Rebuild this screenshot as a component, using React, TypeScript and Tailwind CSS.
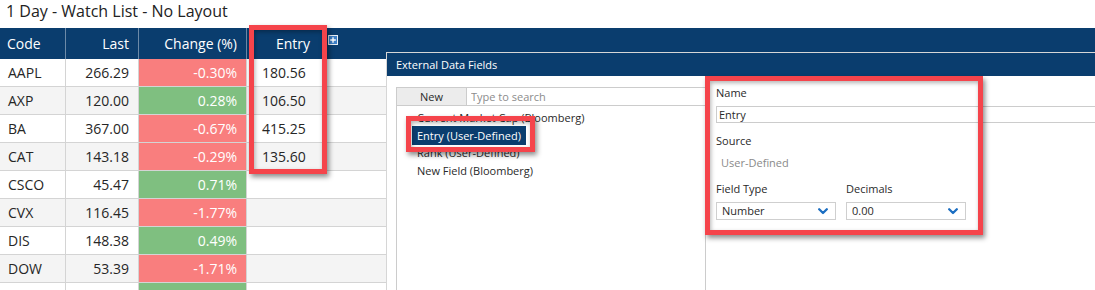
import React from 'react';

const rows = [
  { code: 'AAPL', last: '266.29', change: '-0.30%', entry: '180.56', up: false },
  { code: 'AXP', last: '120.00', change: '0.28%', entry: '106.50', up: true },
  { code: 'BA', last: '367.00', change: '-0.67%', entry: '415.25', up: false },
  { code: 'CAT', last: '143.18', change: '-0.29%', entry: '135.60', up: false },
  { code: 'CSCO', last: '45.47', change: '0.71%', entry: '', up: true },
  { code: 'CVX', last: '116.45', change: '-1.77%', entry: '', up: false },
  { code: 'DIS', last: '148.38', change: '0.49%', entry: '', up: true },
  { code: 'DOW', last: '53.39', change: '-1.71%', entry: '', up: false },
  // next row only peeks in at the bottom edge
  { code: '', last: '', change: '', entry: '', up: true },
];

const fields = [
  'Current Market Cap (Bloomberg)',
  'Entry (User-Defined)',
  'Rank (User-Defined)',
  'New Field (Bloomberg)',
];

function Chevron() {
  return (
    <svg width="10" height="7" viewBox="0 0 10 7">
      <path d="M1.2 1.3 L5 5 L8.8 1.3" fill="none" stroke="#1b6ec2" strokeWidth="2.3" strokeLinecap="round" strokeLinejoin="round" />
    </svg>
  );
}

function PlusIcon() {
  return (
    <svg width="10" height="10" viewBox="0 0 10 10">
      <rect x="0.5" y="0.5" width="9" height="9" fill="#3c7fc6" stroke="#e8eef5" />
      <path d="M5 2.2 V7.8 M2.2 5 H7.8" stroke="#fff" strokeWidth="1.4" />
    </svg>
  );
}

function Select({ value }: { value: string }) {
  return (
    <div className="flex items-center justify-between w-[120px] h-[18px] border border-[#cfcfcf] pl-[5px] pr-[7px] leading-[16px]">
      <span>{value}</span>
      <Chevron />
    </div>
  );
}

const annotate =
  'absolute border-[5px] border-[#f5444b] shadow-[2px_3px_5px_rgba(0,0,0,0.45),inset_1px_2px_4px_rgba(0,0,0,0.3)]';

export default function App() {
  return (
    <div className="relative w-[1095px] h-[290px] overflow-hidden bg-white text-[#262626] font-['Open_Sans',sans-serif]">
      <div className="h-[28px] pl-[6px] text-[16px] leading-[22px] text-[#222]">1 Day - Watch List - No Layout</div>

      {/* grid header */}
      <div className="flex h-[31px] bg-[#0a3d6e] text-white text-[14px] leading-[31px]">
        <div className="w-[66px] pl-[7px] border-r border-white/40">Code</div>
        <div className="w-[73px] text-right pr-[9px] border-r border-white/40">Last</div>
        <div className="w-[108px] text-right pr-[9px] border-r border-white/40">Change (%)</div>
        <div className="w-[72px] text-right pr-[9px]">Entry</div>
        <div className="ml-[9px] mt-[7px]">
          <PlusIcon />
        </div>
      </div>

      {/* grid rows */}
      {rows.map((r, i) => (
        <div
          key={i}
          className={`flex h-[28px] border-b border-[#d4d4d4] text-[14px] leading-[27px] ${i % 2 ? 'bg-[#f4f4f4]' : 'bg-white'}`}
        >
          <div className="w-[66px] pl-[8px] border-r border-[#d4d4d4]">{r.code}</div>
          <div className="w-[73px] text-right pr-[9px] border-r border-[#d4d4d4]">{r.last}</div>
          <div
            className={`w-[108px] text-right pr-[9px] border-r border-[#d4d4d4] text-white ${r.up ? 'bg-[#7fbf80]' : 'bg-[#f97e7e]'}`}
          >
            {r.change}
          </div>
          <div className="pl-[15px]">{r.entry}</div>
        </div>
      ))}

      {/* External Data Fields dialog */}
      <div className="absolute left-[386px] top-[52px] w-[760px] h-[260px] flex flex-col border border-[#d6d6d6] bg-white text-[11px] text-[#2a2a2a]">
        <div className="h-[23px] shrink-0 bg-[#0a3d6e] text-white leading-[23px] pl-[9px]">External Data Fields</div>
        <div className="flex flex-1 pt-[11px] pl-[9px]">
          <div className="w-[310px] border-l border-t border-r border-[#cccccc]">
            <div className="flex h-[18px] border-b border-[#cccccc] leading-[17px]">
              <div className="w-[70px] text-center bg-[#ececec] border-r border-[#cccccc]">New</div>
              <input
                className="flex-1 pl-[4px] bg-transparent outline-none leading-[17px] placeholder:text-[#8c8c8c]"
                placeholder="Type to search"
              />
            </div>
            <div className="pt-[3px]">
              {fields.map((f, i) => (
                <div key={f} className="pl-[15px] leading-[17.5px]">
                  <span className={`px-[5px] py-[2px] ${i === 1 ? 'bg-[#0a3d6e] text-white' : ''}`}>{f}</span>
                </div>
              ))}
            </div>
          </div>

          <div className="flex-1 pl-[10px] pr-[10px] -mt-[2px]">
            <div className="leading-[15px]">Name</div>
            <div className="mt-[6px] h-[17px] border border-[#cccccc] pl-[2px] leading-[15px]">Entry</div>
            <div className="mt-[10px] leading-[15px]">Source</div>
            <div className="mt-[7px] pl-[5px] leading-[15px] text-[#8a8a8a]">User-Defined</div>
            <div className="mt-[11px] flex gap-[10px]">
              <div>
                <div className="leading-[15px]">Field Type</div>
                <div className="mt-[6px]">
                  <Select value="Number" />
                </div>
              </div>
              <div>
                <div className="leading-[15px]">Decimals</div>
                <div className="mt-[6px]">
                  <Select value="0.00" />
                </div>
              </div>
            </div>
          </div>
        </div>
      </div>

      {/* red annotation boxes */}
      <div className={`${annotate} left-[249px] top-[25px] w-[78px] h-[149px]`} />
      <div className={`${annotate} left-[406px] top-[116px] w-[129px] h-[36px]`} />
      <div className={`${annotate} left-[705px] top-[76px] w-[278px] h-[159px]`} />
    </div>
  );
}
